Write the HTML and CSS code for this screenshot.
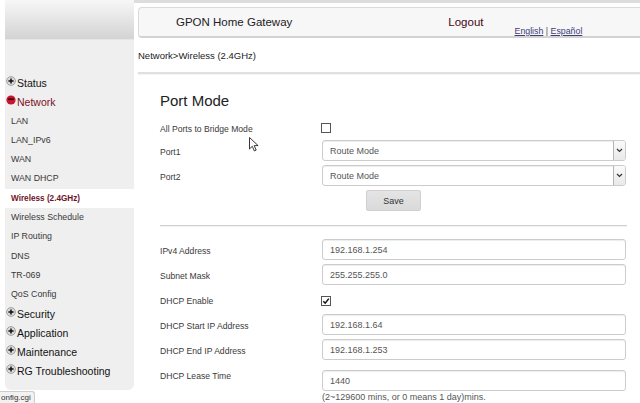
FILE: index.html
```html
<!DOCTYPE html>
<html lang="en">
<head>
    <meta charset="UTF-8">
    <meta name="viewport" content="width=device-width, initial-scale=1.0">
    <title>GPON Home Gateway - Wireless (2.4GHz)</title>
    <link rel="stylesheet" href="styles.css">
</head>
<body>
    <div class="page">
        <aside class="sidebar">
            <div class="side-top"></div>
            <ul class="menu">
                <li class="menu-group">
                    <svg class="toggle" width="10" height="10" viewBox="0 0 10 10"><circle cx="5" cy="5" r="4.4" fill="#d9d9d9" stroke="#777" stroke-width=".6"/><path d="M2.4 5h5.2M5 2.4v5.2" stroke="#111" stroke-width="1.5"/></svg>Status
                </li>
                <li class="menu-group open">
                    <svg class="toggle" width="10" height="10" viewBox="0 0 10 10"><circle cx="5" cy="5" r="4.6" fill="#c8142e"/><path d="M2.2 4.2h5.6" stroke="#3a0309" stroke-width="1.6"/></svg>Network
                </li>
                <li class="menu-item">LAN</li>
                <li class="menu-item">LAN_IPv6</li>
                <li class="menu-item">WAN</li>
                <li class="menu-item">WAN DHCP</li>
                <li class="menu-item active">Wireless (2.4GHz)</li>
                <li class="menu-item">Wireless Schedule</li>
                <li class="menu-item">IP Routing</li>
                <li class="menu-item">DNS</li>
                <li class="menu-item">TR-069</li>
                <li class="menu-item">QoS Config</li>
                <li class="menu-group">
                    <svg class="toggle" width="10" height="10" viewBox="0 0 10 10"><circle cx="5" cy="5" r="4.4" fill="#d9d9d9" stroke="#777" stroke-width=".6"/><path d="M2.4 5h5.2M5 2.4v5.2" stroke="#111" stroke-width="1.5"/></svg>Security
                </li>
                <li class="menu-group">
                    <svg class="toggle" width="10" height="10" viewBox="0 0 10 10"><circle cx="5" cy="5" r="4.4" fill="#d9d9d9" stroke="#777" stroke-width=".6"/><path d="M2.4 5h5.2M5 2.4v5.2" stroke="#111" stroke-width="1.5"/></svg>Application
                </li>
                <li class="menu-group">
                    <svg class="toggle" width="10" height="10" viewBox="0 0 10 10"><circle cx="5" cy="5" r="4.4" fill="#d9d9d9" stroke="#777" stroke-width=".6"/><path d="M2.4 5h5.2M5 2.4v5.2" stroke="#111" stroke-width="1.5"/></svg>Maintenance
                </li>
                <li class="menu-group">
                    <svg class="toggle" width="10" height="10" viewBox="0 0 10 10"><circle cx="5" cy="5" r="4.4" fill="#d9d9d9" stroke="#777" stroke-width=".6"/><path d="M2.4 5h5.2M5 2.4v5.2" stroke="#111" stroke-width="1.5"/></svg>RG Troubleshooting
                </li>
            </ul>
        </aside>

        <main class="main">
            <div class="top-strip"></div>
            <div class="header-bar">
                <span class="title">GPON Home Gateway</span>
                <a class="logout" href="#">Logout</a>
                <span class="lang"><a href="#">English</a> | <a href="#">Español</a></span>
            </div>
            <div class="breadcrumb">Network&gt;Wireless (2.4GHz)</div>

            <div class="content">
                <h2>Port Mode</h2>
                <div class="form-row compact">
                    <label>All Ports to Bridge Mode</label>
                    <span class="check"></span>
                </div>
                <div class="form-row">
                    <label>Port1</label>
                    <div class="select-wrap">
                        <select><option>Route Mode</option></select>
                        <span class="select-arrow"><svg width="7" height="5" viewBox="0 0 7 5"><path d="M1 1l2.5 2.5L6 1" fill="none" stroke="#333" stroke-width="1.2"/></svg></span>
                    </div>
                </div>
                <div class="form-row">
                    <label>Port2</label>
                    <div class="select-wrap">
                        <select><option>Route Mode</option></select>
                        <span class="select-arrow"><svg width="7" height="5" viewBox="0 0 7 5"><path d="M1 1l2.5 2.5L6 1" fill="none" stroke="#333" stroke-width="1.2"/></svg></span>
                    </div>
                </div>
                <div class="form-row">
                    <span></span>
                    <button class="save-btn">Save</button>
                </div>

                <div class="divider"></div>

                <div class="form-row">
                    <label>IPv4 Address</label>
                    <input type="text" value="192.168.1.254">
                </div>
                <div class="form-row">
                    <label>Subnet Mask</label>
                    <input type="text" value="255.255.255.0">
                </div>
                <div class="form-row">
                    <label>DHCP Enable</label>
                    <span class="check checked"><svg width="8" height="8" viewBox="0 0 8 8"><path d="M1.3 4.2l1.9 2L6.8 1.6" fill="none" stroke="#111" stroke-width="1.5"/></svg></span>
                </div>
                <div class="form-row">
                    <label>DHCP Start IP Address</label>
                    <input type="text" value="192.168.1.64">
                </div>
                <div class="form-row">
                    <label>DHCP End IP Address</label>
                    <input type="text" value="192.168.1.253">
                </div>
                <div class="form-row lease">
                    <label>DHCP Lease Time</label>
                    <div>
                        <input type="text" value="1440">
                        <div class="hint">(2~129600 mins, or 0 means 1 day)mins.</div>
                    </div>
                </div>
            </div>
        </main>
    </div>

    <div class="status-bubble">onfig.cgi</div>
    <svg class="cursor" width="11" height="16" viewBox="0 0 11 16"><path d="M.5.5v11.5l2.8-2.7 2 4.6 1.9-.8-2-4.5h3.9z" fill="#fff" stroke="#222" stroke-width=".9"/></svg>
</body>
</html>
```

FILE: styles.css
```css
body {
    margin: 0;
    font-family: "Liberation Sans", Arial, sans-serif;
    background: white;
    height: 403px;
    overflow: hidden;
    position: relative;
}
.page {
    display: flex;
}

/* left menu */
.sidebar {
    flex: none;
    align-self: flex-start;
    width: 129px;
    margin-left: 5px;
    padding-bottom: 9px;
    background: #efefef;
    border-radius: 0 0 6px 6px;
}
.side-top {
    height: 39px;
    background: linear-gradient(#f7f7f7, #d3d3d3);
    border-bottom: 1px solid #e6e6e6;
}
.menu {
    list-style: none;
    margin: 0;
    padding: 33.5px 0 0;
}
.menu-group {
    display: flex;
    align-items: center;
    height: 19px;
    padding-left: 1px;
    font-size: 10.5px;
    color: #111;
}
.menu-group.open {
    color: #7b1124;
}
.toggle {
    margin: -4px 1px 0 0;
    flex: none;
}
.menu-item {
    height: 19.33px;
    line-height: 19.33px;
    padding-left: 6px;
    font-size: 8.8px;
    color: #383838;
}
.menu-item.active {
    background: white;
    color: #6e1426;
    font-weight: bold;
    font-size: 8.2px;
}

/* right side */
.main {
    flex: 1;
    min-width: 0;
}
.top-strip {
    height: 3px;
    background: #dddddd;
}
.header-bar {
    display: flex;
    align-items: center;
    height: 28px;
    margin: 4px -12px 0 4px;
    background: #f7f7f7;
    border: 1px solid #dadada;
    border-bottom: 2px solid #d2d2d2;
    border-radius: 4px;
    font-size: 11.5px;
}
.title {
    margin-left: 37px;
    color: #222;
}
.logout {
    margin-left: 156px;
    color: #450814;
    text-decoration: none;
}
.lang {
    align-self: flex-end;
    margin-left: 31px;
    font-size: 8.8px;
    line-height: 10px;
    color: #555;
}
.lang a {
    color: #3e3e78;
}
.breadcrumb {
    height: 22px;
    margin-left: 4px;
    padding-top: 12px;
    font-size: 9.5px;
    line-height: 12px;
    color: #222;
    border-bottom: 2px solid #e0e0e0;
    box-shadow: 0 1px 1px rgba(0, 0, 0, 0.04);
}
.content {
    padding: 18px 0 0 26px;
}
h2 {
    margin: 0 0 6px;
    font-size: 15px;
    line-height: 18px;
    font-weight: normal;
    color: #222;
}
.form-row {
    display: grid;
    grid-template-columns: 162px 304px;
    align-items: center;
    height: 25px;
    font-size: 8.6px;
    color: #3a3a3a;
}
.form-row label {
    padding-top: 3px;
}
.form-row.compact {
    height: 22px;
}
.form-row.lease {
    height: auto;
    align-items: start;
    padding-top: 8px;
}
.form-row.lease label {
    padding-top: 0;
    line-height: 12px;
}
.check {
    display: flex;
    align-items: center;
    justify-content: center;
    width: 8px;
    height: 8px;
    margin: 2px 0 0 -1px;
    border: 1px solid #555;
    background: white;
}
input, select {
    box-sizing: border-box;
    width: 304px;
    height: 21px;
    margin: 0;
    padding: 0 7px;
    font-family: "Liberation Sans", Arial, sans-serif;
    font-size: 9px;
    color: #555;
    background: white;
    border: 1px solid #cccccc;
    border-radius: 3px;
    box-shadow: inset 0 1px 1px rgba(0, 0, 0, 0.075);
    outline: none;
    display: block;
}
select {
    appearance: none;
    -webkit-appearance: none;
}
.select-wrap {
    position: relative;
    width: 304px;
}
.select-arrow {
    position: absolute;
    right: 1px;
    top: 1px;
    bottom: 1px;
    width: 11px;
    display: flex;
    align-items: center;
    justify-content: center;
    background: linear-gradient(#fafafa, #e9e9e9);
    border-left: 1px solid #b5b5b5;
    border-radius: 0 2px 2px 0;
}
.save-btn {
    justify-self: start;
    width: 55px;
    height: 21px;
    margin-left: 44px;
    font-family: "Liberation Sans", Arial, sans-serif;
    font-size: 9px;
    color: #333;
    background: linear-gradient(#e4e4e4, #dadada);
    border: 1px solid #d0d0d0;
    border-radius: 2px;
}
.divider {
    width: 467px;
    height: 1px;
    margin: 12px 0 11px;
    background: #d0d0d0;
    box-shadow: 0 1px 1px rgba(0, 0, 0, 0.06);
}
.hint {
    font-size: 9px;
    line-height: 12px;
    color: #555;
}

/* browser overlays */
.status-bubble {
    position: absolute;
    left: 0;
    bottom: 0;
    padding: 1px 3px 1px 1px;
    font-size: 8px;
    line-height: 9px;
    color: #333;
    background: #f2f2f2;
    border: 1px solid #cccccc;
    border-left: none;
    border-bottom: none;
    border-top-right-radius: 3px;
}
.cursor {
    position: absolute;
    left: 249px;
    top: 137px;
}
```
